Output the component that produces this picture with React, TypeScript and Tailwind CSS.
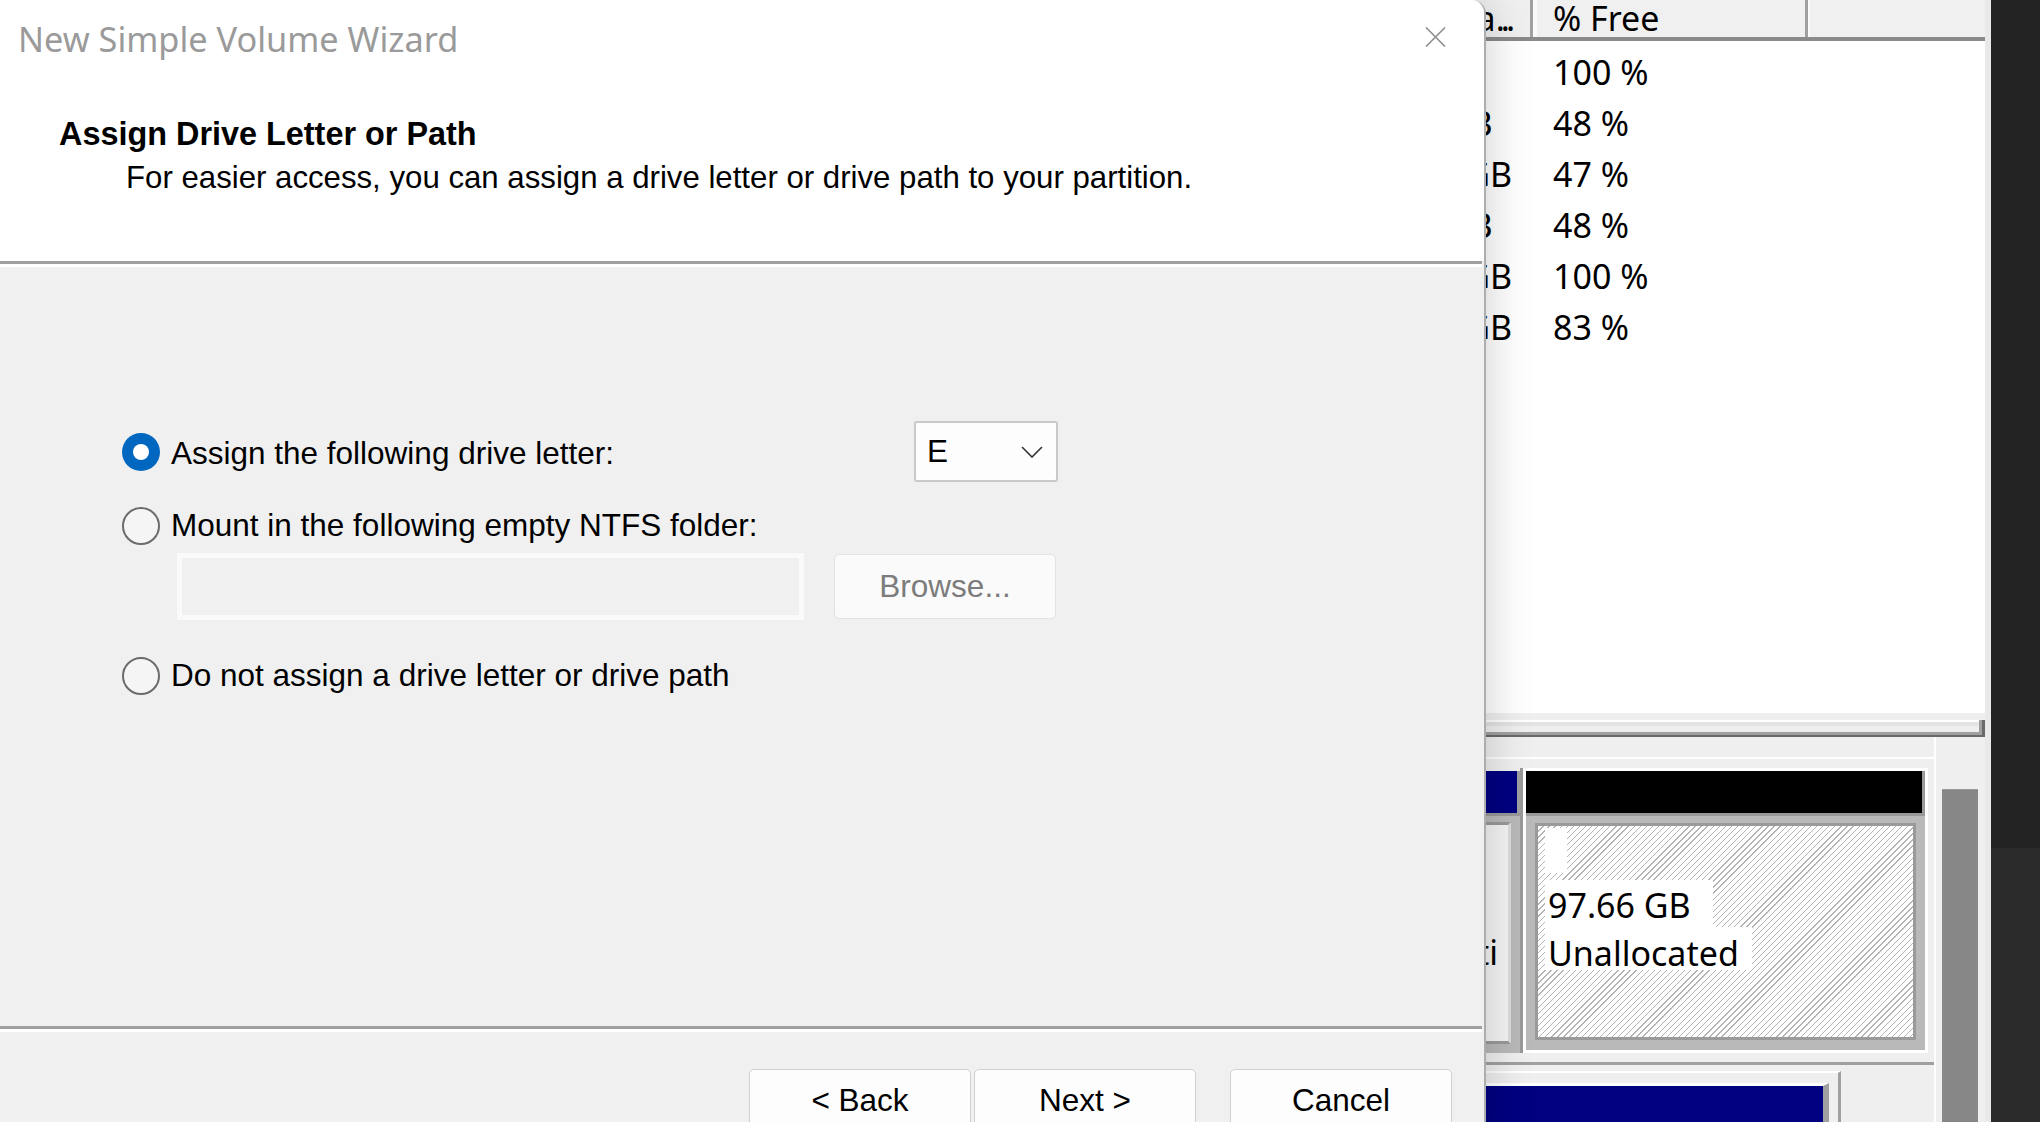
import React from "react";

const dlgFont = "font-['Liberation_Sans',Arial,sans-serif]";
const uiFont = "font-['Noto_Sans',sans-serif]";

function Radio({ checked }: { checked?: boolean }) {
  if (checked) {
    return (
      <span className="w-[38px] h-[38px] shrink-0 rounded-full bg-[#0067c0] flex items-center justify-center">
        <span className="w-[16px] h-[16px] rounded-full bg-white" />
      </span>
    );
  }
  return <span className="w-[38px] h-[38px] shrink-0 rounded-full border-2 border-[#6b6b6b] bg-[#f5f5f5]" />;
}

const rows = [
  { fs: "450 MB", pf: "100 %" },
  { fs: "45.60 GB", pf: "48 %" },
  { fs: "110.63 GB", pf: "47 %" },
  { fs: "45.89 GB", pf: "48 %" },
  { fs: "100.00 GB", pf: "100 %" },
  { fs: "387.12 GB", pf: "83 %" },
];

function DiskManagement() {
  return (
    <div className="flex w-[2040px] h-[1122px]">
      <div className={`w-[1991px] shrink-0 flex flex-col bg-[#efefef] border-r-[6px] border-[#e9e9e9] ${uiFont} text-black`}>
        {/* column headers */}
        <div className="h-[41px] shrink-0 flex bg-[#f0f0f0] border-b-[4px] border-[#8a8a8a] text-[34px] leading-[38px]">
          <div className="w-[1280px] shrink-0" />
          <div className="w-[253px] shrink-0 border-r-[3px] border-[#a0a0a0] flex justify-end items-center pr-[19px] pb-[2px] whitespace-nowrap overflow-hidden">
            Free Spa<span className="tracking-[-4px]">...</span>
          </div>
          <div className="w-[275px] shrink-0 border-l-[4px] border-[#fafafa] border-r-[3px] border-r-[#a0a0a0] flex items-center pl-[16px] pb-[2px]">
            % Free
          </div>
          <div className="flex-1 border-l-[2px] border-[#fafafa]" />
        </div>
        {/* list */}
        <div className="h-[672px] shrink-0 bg-white pt-[6px] text-[34px]">
          {rows.map((r, i) => (
            <div key={i} className="h-[51px] flex items-center">
              <div className="w-[1280px] shrink-0" />
              <div className="w-[253px] shrink-0 pl-[70px] whitespace-nowrap">{r.fs}</div>
              <div className="pl-[20px]">{r.pf}</div>
            </div>
          ))}
        </div>
        {/* list bottom edge */}
        <div className="h-[7px] shrink-0 bg-[#efefef]" />
        <div className="h-[17px] shrink-0 border-b-2 border-r-[3px] border-[#696969]">
          <div className="h-full border-b-[3px] border-r-[3px] border-[#a0a0a0] flex flex-col">
            <div className="h-[2px] bg-white" />
            <div className="h-[4px] bg-[#e3e3e3]" />
            <div className="flex-1 bg-[#efefef]" />
          </div>
        </div>
        {/* graphical view */}
        <div className="flex-1 flex min-h-0">
          <div className="w-[1936px] shrink-0 border-r-2 border-white pt-[20px] pl-[20px]">
            {/* disk panel 1 */}
            <div className="border-t-2 border-white pt-[9px] pb-[9px] border-b-[3px] border-b-[#a0a0a0]">
              <div className="flex h-[285px]">
                {/* left partition (mostly covered) */}
                <div className="flex-1 flex flex-col border-r-[3px] border-[#999999] pt-[3px]">
                  <div className="h-[42px] flex">
                    <div className="flex-1 bg-[#000080]" />
                    <div className="w-[3px] bg-[#a0a0a0]" />
                  </div>
                  <div className="h-[3px] bg-[#999999]" />
                  <div className="flex-1 bg-[#b9b9b9] pt-[6px] pr-[9px] pb-[9px]">
                    <div className="h-full bg-[#f4f4f4] border-[3px] border-[#9a9a9a] border-r-[#dcdcdc] flex flex-col text-[34px] pt-[2px] overflow-hidden">
                      <div className="h-[52px]" />
                      <div className="h-[47px]" />
                      <div className="h-[43px] leading-[52px] text-right pr-[10px] whitespace-nowrap">Healthy (Basic Data Parti</div>
                    </div>
                  </div>
                </div>
                {/* unallocated partition */}
                <div className="w-[405px] shrink-0 border-[3px] border-white flex flex-col">
                  <div className="h-[42px] flex">
                    <div className="flex-1 bg-black" />
                    <div className="w-[3px] bg-[#999999]" />
                  </div>
                  <div className="h-[3px] bg-[#999999]" />
                  <div className="flex-1 bg-[#b9b9b9] pt-[7px] pl-[9px] pr-[9px] pb-[10px]">
                    <div className="h-full border-[3px] border-[#9a9a9a] bg-[repeating-linear-gradient(135deg,#ffffff_0px,#ffffff_3.4px,#b4b4b4_3.4px,#b4b4b4_4.3px)] pl-[7px] pt-[2px] flex flex-col items-start text-[34px]">
                      <div className="w-[22px] h-[45px] bg-white" />
                      <div className="mt-[7px] h-[47px] leading-[50px] bg-white pl-[3px] pr-[22px] whitespace-nowrap">97.66 GB</div>
                      <div className="h-[43px] leading-[52px] bg-white pl-[3px] pr-[13px] whitespace-nowrap">Unallocated</div>
                    </div>
                  </div>
                </div>
                <div className="w-[6px] shrink-0" />
              </div>
            </div>
            {/* disk panel 2 */}
            <div className="mt-[6px] w-[1821px] h-[80px] border-t-2 border-white border-r-[3px] border-r-[#a0a0a0] pt-[10px] pr-[9px]">
              <div className="h-full border-t-[3px] border-white border-r-[6px] border-r-[#a0a0a0] bg-[#000080]" />
            </div>
          </div>
          {/* vertical scrollbar */}
          <div className="flex-1 pl-[6px] pt-[52px]">
            <div className="w-[36px] h-full bg-[#878787] border-t border-[#9a9a9a]" />
          </div>
        </div>
      </div>
      {/* desktop strip */}
      <div className="flex-1 flex flex-col">
        <div className="h-[848px] bg-[#232323]" />
        <div className="flex-1 bg-[#2a2a2a]" />
      </div>
    </div>
  );
}

function Wizard() {
  const btn =
    "w-[222px] h-[64px] shrink-0 bg-[#fdfdfd] border border-[#d0d0d0] rounded-[5px] flex items-center justify-center text-[31.5px] text-black";
  return (
    <div
      className={`absolute left-0 top-0 w-[1486px] h-[1160px] bg-[#f0f0f0] border-r-2 border-[#adadad] rounded-tr-[14px] shadow-[0_0_48px_rgba(0,0,0,0.2)] flex flex-col overflow-hidden ${dlgFont}`}
    >
      {/* header */}
      <div className="h-[261px] shrink-0 bg-white flex flex-col">
        <div className="flex items-start justify-between pl-[18px] pr-[38px] pt-[17px]">
          <span className={`text-[34.3px] leading-[44px] text-[#9a9a9a] ${uiFont}`}>New Simple Volume Wizard</span>
          <svg className="mt-[10px]" width="21" height="20" viewBox="0 0 21 20">
            <path d="M1 0.5 L20 19.5 M20 0.5 L1 19.5" stroke="#8f8f8f" strokeWidth="1.6" fill="none" />
          </svg>
        </div>
        <div className="mt-[53px] pl-[59px] text-[32.4px] leading-[40px] font-bold text-black">Assign Drive Letter or Path</div>
        <div className="mt-[4px] pl-[126px] text-[31.2px] leading-[40px] text-black">
          For easier access, you can assign a drive letter or drive path to your partition.
        </div>
      </div>
      <div className="h-[3px] shrink-0 bg-[#a0a0a0] mr-[2px]" />
      <div className="h-[3px] shrink-0 bg-white mr-[2px]" />
      {/* body */}
      <div className="h-[759px] shrink-0 pt-[154px] pl-[122px] text-[31.5px] text-black">
        <div className="w-[936px] h-[61px] flex items-center">
          <Radio checked />
          <span className="ml-[11px] mt-[4px]">Assign the following drive letter:</span>
          <div className="ml-auto w-[144px] h-[61px] bg-[#fdfdfd] border-2 border-[#c9c9c9] rounded-[3px] flex items-center justify-between pl-[11px] pr-[13px]">
            <span>E</span>
            <svg width="22" height="12" viewBox="0 0 22 12">
              <path d="M1 1 L11 11 L21 1" stroke="#333333" strokeWidth="1.6" fill="none" />
            </svg>
          </div>
        </div>
        <div className="mt-[25px] h-[38px] flex items-center">
          <Radio />
          <span className="ml-[11px]">Mount in the following empty NTFS folder:</span>
        </div>
        <div className="mt-[8px] pl-[55px] flex items-center">
          <div className="w-[627px] h-[67px] border-[5px] border-[#fafafa] bg-[#f0f0f0]" />
          <div className="ml-[30px] w-[222px] h-[65px] bg-[#fafafa] border border-[#e2e2e2] rounded-[5px] flex items-center justify-center text-[#7c7c7c]">
            Browse...
          </div>
        </div>
        <div className="mt-[37px] h-[38px] flex items-center">
          <Radio />
          <span className="ml-[11px]">Do not assign a drive letter or drive path</span>
        </div>
      </div>
      <div className="h-[3px] shrink-0 bg-[#a0a0a0] mr-[2px]" />
      <div className="h-[3px] shrink-0 bg-white mr-[2px]" />
      {/* footer */}
      <div className="flex justify-end pr-[32px] pt-[37px]">
        <div className={btn}>&lt; Back</div>
        <div className={`${btn} ml-[3px]`}>Next &gt;</div>
        <div className={`${btn} ml-[34px]`}>Cancel</div>
      </div>
    </div>
  );
}

export default function App() {
  return (
    <div className="relative w-[2040px] h-[1122px] overflow-hidden bg-[#efefef]">
      <DiskManagement />
      <Wizard />
    </div>
  );
}
